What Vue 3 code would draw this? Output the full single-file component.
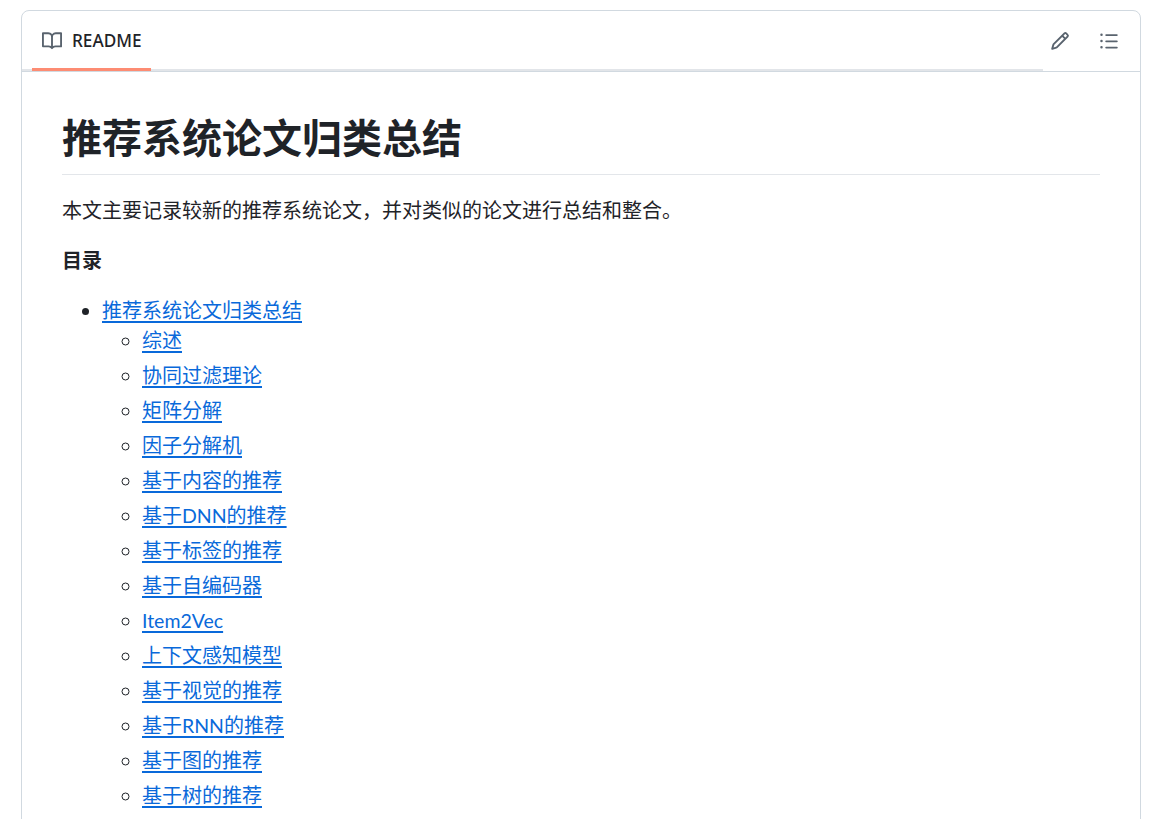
<script setup>
const items = ['综述','协同过滤理论','矩阵分解','因子分解机','基于内容的推荐','基于DNN的推荐','基于标签的推荐','基于自编码器','Item2Vec','上下文感知模型','基于视觉的推荐','基于RNN的推荐','基于图的推荐','基于树的推荐']
const parts = (text) => text.split(/([A-Za-z0-9]+)/).filter(Boolean)
const isLatin = (part) => /^[A-Za-z0-9]+$/.test(part)
</script>

<template>
  <div class="page">
    <section class="card">
      <header class="head">
        <nav class="tabs">
          <div class="tab">
            <svg class="icon" viewBox="0 0 16 16" width="20" height="20"><path fill="#59636e" d="M0 1.75A.75.75 0 0 1 .75 1h4.253c1.227 0 2.317.59 3 1.501A3.743 3.743 0 0 1 11.006 1h4.245a.75.75 0 0 1 .75.75v10.5a.75.75 0 0 1-.75.75h-4.507a2.25 2.25 0 0 0-1.591.659l-.622.621a.75.75 0 0 1-1.06 0l-.622-.621A2.25 2.25 0 0 0 5.258 13H.75a.75.75 0 0 1-.75-.75Zm7.251 10.324.004-5.073-.002-2.253A2.25 2.25 0 0 0 5.003 2.5H1.5v9h3.757a3.75 3.75 0 0 1 1.994.574ZM8.755 4.75l-.004 7.322a3.752 3.752 0 0 1 1.992-.572H14.5v-9h-3.495a2.25 2.25 0 0 0-2.25 2.25Z"/></svg>
            <span>README</span>
          </div>
        </nav>
        <div class="actions">
          <svg viewBox="0 0 16 16" width="20" height="20"><path fill="#59636e" d="M11.013 1.427a1.75 1.75 0 0 1 2.474 0l1.086 1.086a1.75 1.75 0 0 1 0 2.474l-8.61 8.61c-.21.21-.47.364-.756.445l-3.251.93a.75.75 0 0 1-.927-.928l.929-3.25c.081-.286.235-.547.445-.758l8.61-8.61Zm.176 4.823L9.75 4.81l-6.286 6.287a.253.253 0 0 0-.064.108l-.558 1.953 1.953-.558a.253.253 0 0 0 .108-.064Zm1.238-3.763a.25.25 0 0 0-.354 0L10.811 3.75l1.439 1.44 1.263-1.263a.25.25 0 0 0 0-.354Z"/></svg>
          <svg viewBox="0 0 16 16" width="20" height="20"><path fill="#59636e" d="M5.75 2.5h8.5a.75.75 0 0 1 0 1.5h-8.5a.75.75 0 0 1 0-1.5Zm0 5h8.5a.75.75 0 0 1 0 1.5h-8.5a.75.75 0 0 1 0-1.5Zm0 5h8.5a.75.75 0 0 1 0 1.5h-8.5a.75.75 0 0 1 0-1.5ZM2 14a1 1 0 1 1 0-2 1 1 0 0 1 0 2Zm1-6a1 1 0 1 1-2 0 1 1 0 0 1 2 0ZM2 4a1 1 0 1 1 0-2 1 1 0 0 1 0 2Z"/></svg>
        </div>
      </header>
      <article class="body">
        <h1>推荐系统论文归类总结</h1>
        <p>本文主要记录较新的推荐系统论文，并对类似的论文进行总结和整合。</p>
        <p><strong>目录</strong></p>
        <ul class="outer">
          <li>
            <a>推荐系统论文归类总结</a>
            <ul class="inner">
              <li v-for="item in items" :key="item"><a><template v-for="part in parts(item)" :key="part"><span v-if="isLatin(part)" class="latin">{{ part }}</span><template v-else>{{ part }}</template></template></a></li>
            </ul>
          </li>
        </ul>
      </article>
    </section>
  </div>
</template>

<style>
html, body { overflow: hidden; height: 819px; background: #fff; }
</style>

<style scoped>
.page {
  height: 819px;
  overflow: hidden;
  padding: 10px 14px 0 21px;
  box-sizing: border-box;
  font-family: "Lato", "Noto Sans CJK SC", sans-serif;
  color: #1f2328;
}
.card {
  border: 1px solid #d1d9e0;
  border-radius: 8px;
  width: 1120px;
  min-height: 900px;
  box-sizing: border-box;
}
.head {
  height: 60px;
  display: flex;
  border-bottom: 1px solid #d1d9e0;
  position: relative;
}
.tabs {
  width: 1021px;
  margin-bottom: -1px;
  padding-left: 10px;
  box-sizing: border-box;
  border-bottom: 2px solid #e2e5e9;
  height: 60px;
  display: flex;
}
.tab {
  width: 119px;
  height: 60px;
  box-sizing: border-box;
  border-bottom: 3px solid #fd8c73;
  display: flex;
  align-items: center;
  gap: 10px;
  padding: 2px 0 0 10px;
  font-family: "Noto Sans", sans-serif;
  font-size: 17.2px;
  font-weight: 500;
  color: #1f2328;
}
.icon { flex: none; }
.actions {
  flex: 1;
  display: flex;
  gap: 29px;
  padding: 20px 0 0 7px;
}
.body { padding: 40px 40px 0; }
h1 {
  margin: 0 0 20px;
  padding-bottom: 10px;
  font-size: 40px;
  line-height: 52px;
  font-weight: 600;
  border-bottom: 1px solid #e3e6ea;
}
p {
  margin: 0 0 20px;
  font-size: 20px;
  line-height: 30px;
}
strong { font-weight: 600; }
ul { margin: 0; padding: 0 0 0 40px; font-size: 20px; line-height: 30px; }
.outer { list-style: disc; }
.inner { list-style: circle; }
.inner li { height: 30px; }
.inner li + li { margin-top: 5px; }
.latin { font-size: 19.5px; line-height: 1; }
a {
  color: #0969da;
  text-decoration: underline;
  text-decoration-thickness: 2px;
  text-underline-offset: 3px;
}
</style>
